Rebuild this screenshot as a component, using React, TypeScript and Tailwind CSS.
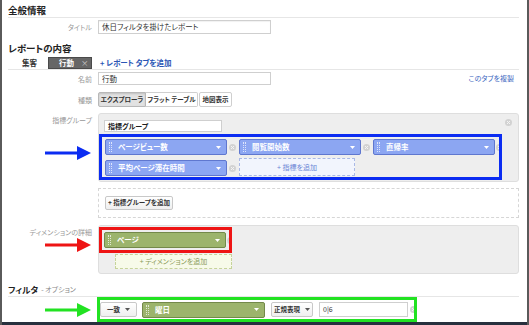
import React from "react";

type Tone = "blue" | "green";

const CHIP_TONE: Record<Tone, string> = {
  blue: "bg-[#8ca6f2] border-[#5f77cf]",
  green: "bg-[#9cb46c] border-[#73894a]",
};

function Grip() {
  return (
    <div className="ml-[3px] flex gap-[1px]">
      <div className="h-[10px] w-0 border-l border-dotted border-white/70" />
      <div className="h-[10px] w-0 border-l border-dotted border-white/70" />
    </div>
  );
}

function Chip({ label, tone, w = "w-[122px]" }: { label: string; tone: Tone; w?: string }) {
  return (
    <div className={`flex h-[16px] ${w} shrink-0 items-center rounded-[2px] border ${CHIP_TONE[tone]}`}>
      <Grip />
      <span className="ml-[6px] whitespace-nowrap text-[7.5px] font-bold leading-none text-white">{label}</span>
      <svg className="ml-auto mr-[5px]" width="5" height="3" viewBox="0 0 5 3">
        <path d="M0 0h5L2.5 3z" fill="#fff" />
      </svg>
    </div>
  );
}

function Remove() {
  return (
    <svg className="shrink-0" width="7" height="7" viewBox="0 0 7 7">
      <circle cx="3.5" cy="3.5" r="3.5" fill="#d2d2d2" />
      <path d="M2 2l3 3M5 2l-3 3" stroke="#f4f4f4" strokeWidth="1" />
    </svg>
  );
}

function Arrow({ color }: { color: string }) {
  return (
    <svg className="mr-[1px]" width="46" height="14" viewBox="0 0 46 14">
      <rect x="0" y="5.5" width="33" height="3" fill={color} />
      <polygon points="32,0 46,7 32,14" fill={color} />
    </svg>
  );
}

function Label({ children }: { children: React.ReactNode }) {
  return (
    <div className="w-[84px] shrink-0 whitespace-nowrap text-right text-[7px] leading-[10px] text-[#999]">{children}</div>
  );
}

function DropButton({ label, w }: { label: string; w: string }) {
  return (
    <div
      className={`flex h-[15px] ${w} shrink-0 items-center justify-center gap-[5px] whitespace-nowrap rounded-[2px] border border-[#c8c8c8] bg-gradient-to-b from-white to-[#efefef] text-[6.5px] font-bold text-[#333]`}
    >
      {label}
      <svg width="5" height="3" viewBox="0 0 5 3">
        <path d="M0 0h5L2.5 3z" fill="#555" />
      </svg>
    </div>
  );
}

export default function App() {
  return (
    <div className="flex h-[325px] w-[529px] flex-col overflow-hidden border-x-2 border-[#5a5a5a] bg-white font-['Noto_Sans_CJK_JP','Noto_Sans',sans-serif] [font-feature-settings:'palt']">
      <div className="flex-1 pl-[6px] pr-[8px]">
        {/* 全般情報 */}
        <div className="h-[18px] border-b border-[#e6e6e6] pt-[4px] text-[9.5px] font-bold leading-[12px] text-[#222]">
          全般情報
        </div>
        <div className="mt-[2px] flex h-[14px] items-center gap-[6px]">
          <Label>タイトル</Label>
          <div className="flex h-[14px] w-[173px] items-center border border-[#cfcfcf] px-[3px] text-[7.5px] text-[#333] shadow-[inset_0_1px_1px_rgba(0,0,0,0.06)]">
            休日フィルタを掛けたレポート
          </div>
        </div>

        {/* レポートの内容 */}
        <div className="mt-[8px] text-[9.5px] font-bold leading-[12px] text-[#222]">レポートの内容</div>
        <div className="mt-[3px] flex h-[13px] items-stretch border-b border-[#e6e6e6] text-[7.5px]">
          <div className="flex w-[40px] items-center pl-[14px] font-bold text-[#333]">集客</div>
          <div className="flex w-[44px] items-center gap-[7px] border border-[#4a4a4a] bg-[#666] pl-[10px] font-bold text-white">
            行動<span className="font-normal text-[#ccc]">×</span>
          </div>
          <div className="ml-[8px] flex items-center whitespace-nowrap font-bold text-[#2a56b5]">+ レポート タブを追加</div>
        </div>
        <div className="mt-[2px] flex h-[13px] items-center gap-[6px]">
          <Label>名前</Label>
          <div className="flex h-[13px] w-[173px] items-center border border-[#cfcfcf] px-[3px] text-[7.5px] text-[#333]">
            行動
          </div>
          <div className="ml-auto mr-[5px] text-[7px] text-[#3a66c0]">このタブを複製</div>
        </div>
        <div className="mt-[7px] flex h-[15px] items-center gap-[6px]">
          <Label>種類</Label>
          <div className="flex h-[15px] whitespace-nowrap text-[6.5px] font-bold text-[#333]">
            <div className="flex w-[48px] items-center justify-center rounded-l-[2px] border border-[#b8b8b8] bg-[#e2e2e2] shadow-[inset_0_1px_2px_rgba(0,0,0,0.15)]">
              エクスプローラ
            </div>
            <div className="flex w-[52px] items-center justify-center rounded-r-[2px] border-y border-r border-[#cfcfcf] bg-white">
              フラット テーブル
            </div>
            <div className="ml-[1px] flex w-[33px] items-center justify-center rounded-[2px] border border-[#cfcfcf] bg-white">
              地図表示
            </div>
          </div>
        </div>

        {/* 指標グループ */}
        <div className="mt-[6px] flex gap-[6px]">
          <div className="flex w-[84px] shrink-0 flex-col items-end">
            <div className="pt-[2px] text-right text-[7px] leading-[10px] text-[#999]">指標グループ</div>
            <div className="mt-[21px]">
              <Arrow color="#0b2cf2" />
            </div>
          </div>
          <div className="flex-1 rounded-[3px] border border-[#dedede] bg-[#eeeeee] pb-[1px] pt-[6px]">
            <div className="flex items-start justify-between pl-[5px] pr-[6px]">
              <div className="flex h-[12px] w-[118px] items-center border border-[#cfcfcf] bg-white px-[3px] text-[7px] font-bold text-[#222]">
                指標グループ
              </div>
              <div className="-mt-[1px]">
                <Remove />
              </div>
            </div>
            <div className="mt-[2px] w-[403px] overflow-hidden border-[3px] border-[#0b2cf2] pb-[1px] pl-[3px] pt-[2px]">
              <div className="flex h-[16px] items-center">
                <Chip label="ページビュー数" tone="blue" />
                <div className="ml-[2px] mr-[3px]">
                  <Remove />
                </div>
                <Chip label="閲覧開始数" tone="blue" />
                <div className="ml-[2px] mr-[3px]">
                  <Remove />
                </div>
                <Chip label="直帰率" tone="blue" />
                <div className="ml-[1px]">
                  <Remove />
                </div>
              </div>
              <div className="mt-[5px] flex h-[16px] items-end">
                <Chip label="平均ページ滞在時間" tone="blue" />
                <div className="mb-[4px] ml-[2px] mr-[3px]">
                  <Remove />
                </div>
                <div className="flex h-[18px] w-[116px] shrink-0 items-center justify-center border border-dashed border-[#a9b9e6] bg-[#f2f5fd] text-[7px] text-[#6c86d6]">
                  + 指標を追加
                </div>
              </div>
            </div>
          </div>
        </div>

        <div className="mt-[6px] flex gap-[6px]">
          <div className="w-[84px] shrink-0" />
          <div className="flex h-[30px] flex-1 items-center border border-dashed border-[#d6d6d6] pl-[6px]">
            <div className="flex h-[14px] w-[68px] items-center justify-center whitespace-nowrap rounded-[2px] border border-[#c8c8c8] bg-gradient-to-b from-white to-[#efefef] text-[6.5px] font-bold text-[#333]">
              + 指標グループを追加
            </div>
          </div>
        </div>

        {/* ディメンションの詳細 */}
        <div className="mt-[7px] flex gap-[6px]">
          <div className="flex w-[84px] shrink-0 flex-col items-end">
            <div className="whitespace-nowrap pt-[2px] text-right text-[7px] leading-[10px] text-[#999]">
              ディメンションの詳細
            </div>
            <div className="mt-[1px]">
              <Arrow color="#ee1414" />
            </div>
          </div>
          <div className="h-[49px] flex-1 rounded-[3px] border border-[#dedede] bg-[#eeeeee] pt-[1px]">
            <div className="flex w-[133px] items-center overflow-hidden border-[3px] border-[#ee1414] py-[2px] pl-[2px]">
              <Chip label="ページ" tone="green" />
              <div className="ml-[1px]">
                <Remove />
              </div>
            </div>
            <div className="ml-[16px] mt-[1px] flex h-[15px] w-[117px] items-center justify-center border border-dashed border-[#c6d39a] bg-[#f7fae9] text-[7px] text-[#8a9a5a]">
              + ディメンションを追加
            </div>
          </div>
        </div>

        {/* フィルタ */}
        <div className="mt-[9px] flex h-[14px] items-center gap-[3px] border-b border-[#e6e6e6] leading-none">
          <span className="text-[8.5px] font-bold text-[#222]">フィルタ</span>
          <span className="text-[7px] text-[#888]">- オプション</span>
        </div>
        <div className="flex h-[25px] gap-[5px]">
          <div className="flex w-[84px] shrink-0 items-center justify-end">
            <Arrow color="#22e222" />
          </div>
          <div className="flex w-[320px] items-center overflow-hidden border-[3px] border-[#22e222]">
            <DropButton label="一致" w="w-[37px]" />
            <div className="ml-[5px]">
              <Chip label="曜日" tone="green" w="w-[123px]" />
            </div>
            <div className="ml-[6px]">
              <DropButton label="正規表現" w="w-[42px]" />
            </div>
            <div className="ml-[6px] flex h-[15px] w-[89px] shrink-0 items-center border border-[#cfcfcf] bg-white px-[3px] text-[7px] text-[#333]">
              0|6
            </div>
            <div className="ml-[2px]">
              <Remove />
            </div>
          </div>
        </div>
      </div>
      <div className="h-[3px] shrink-0 bg-[#28303e]" />
    </div>
  );
}
